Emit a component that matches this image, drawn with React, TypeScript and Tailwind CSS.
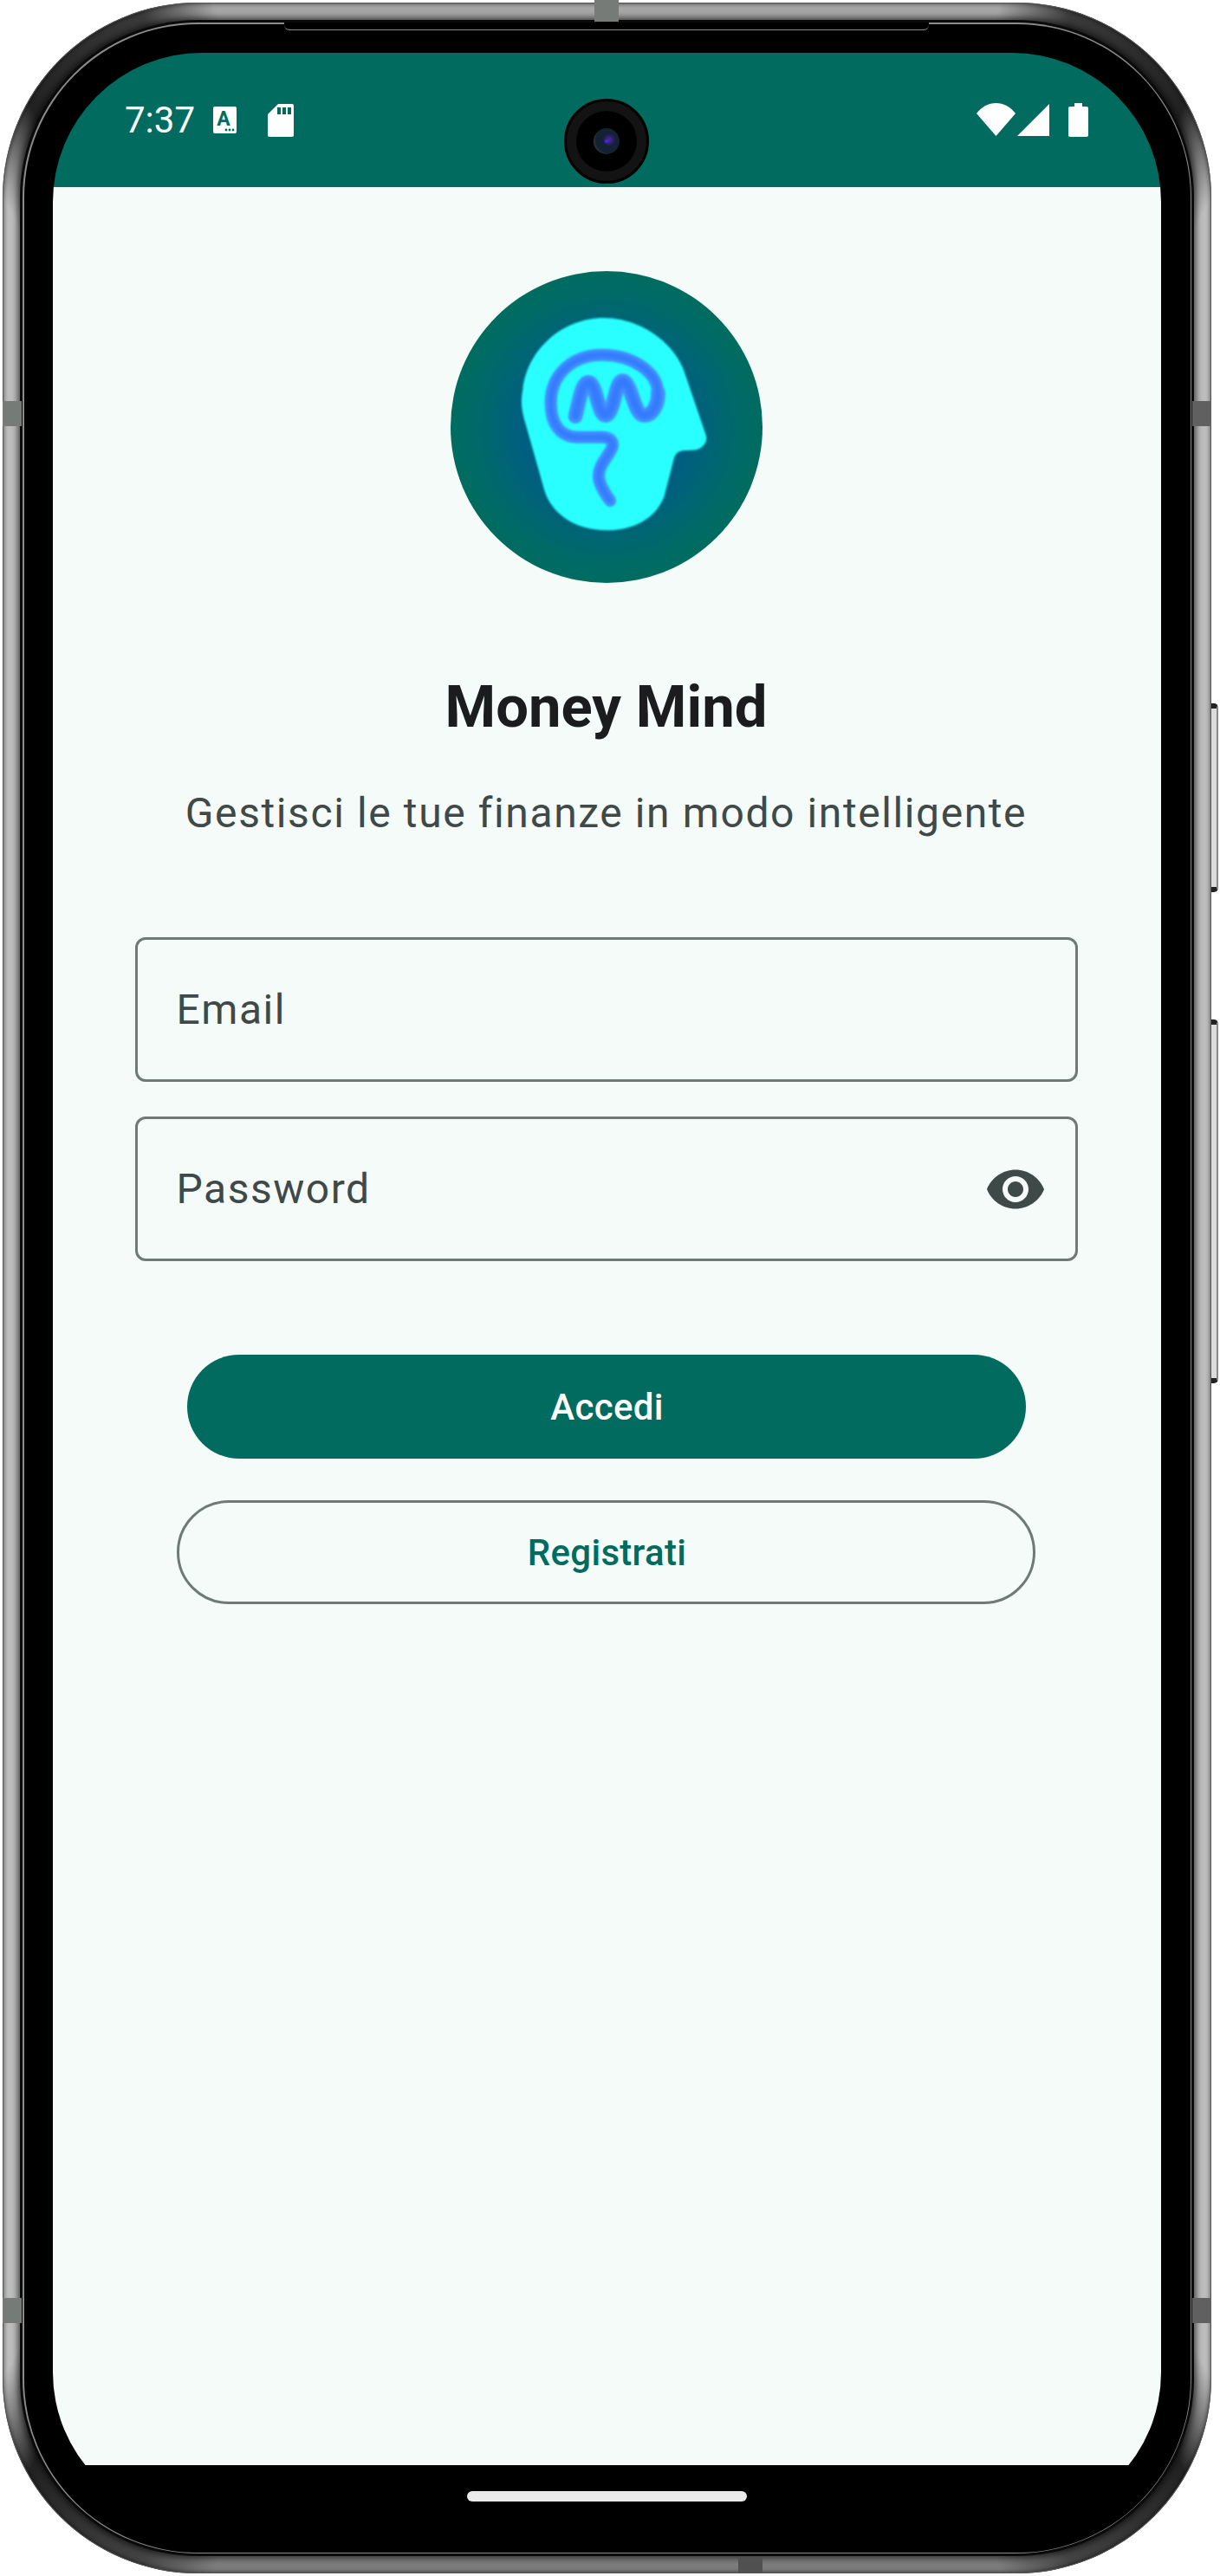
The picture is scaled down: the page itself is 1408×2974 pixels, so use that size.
const Band = ({ className }: { className: string }) => (
  <div className={`absolute ${className}`} />
);

const SideKey = ({ className }: { className: string }) => (
  <div
    className={`absolute left-[1395px] w-[8px] rounded-r-[5px] border-y-[6px] border-r-2 border-y-[#222] border-r-[#8a8a8a] bg-[#dcdcdc] ${className}`}
  />
);

const StatusBar = () => (
  <div className="relative flex h-[155px] shrink-0 items-start justify-between bg-[#006b5e] pr-[84px] pl-[83px] text-white">
    <div className="flex items-start">
      <span className="mt-[53px] text-[42px] leading-[50px]">7:37</span>
      <svg viewBox="0 0 27 31" className="mt-[62px] ml-[21px] h-[31px] w-[27px]">
        <rect width="27" height="31" rx="2" fill="#fff" />
        <text
          x="12"
          y="22"
          textAnchor="middle"
          fontFamily="Roboto"
          fontWeight="700"
          fontSize="23"
          fill="#006b5e"
        >
          A
        </text>
        <circle cx="15" cy="27" r="1.4" fill="#006b5e" />
        <circle cx="19" cy="27" r="1.4" fill="#006b5e" />
        <circle cx="23" cy="27" r="1.4" fill="#006b5e" />
      </svg>
      <svg viewBox="0 0 30 38" className="mt-[59px] ml-[36px] h-[38px] w-[30px]">
        <path
          d="M12 0H28a2 2 0 0 1 2 2V36a2 2 0 0 1-2 2H2a2 2 0 0 1-2-2V12z"
          fill="#fff"
        />
        <rect x="11" y="4" width="4" height="8" fill="#006b5e" />
        <rect x="17" y="4" width="4" height="8" fill="#006b5e" />
        <rect x="23" y="4" width="4" height="8" fill="#006b5e" />
      </svg>
    </div>

    {/* camera */}
    <div className="absolute top-[53px] left-[590px] flex h-[98px] w-[98px] items-center justify-center rounded-full border-[3px] border-black bg-[#131313]">
      <div className="flex h-[70px] w-[70px] items-center justify-center rounded-full bg-black">
        <div className="flex h-[30px] w-[30px] items-center justify-center rounded-full bg-[radial-gradient(circle_at_60%_45%,#4a2aa8_0,#161f3a_30%,#10242f_62%,#3a3d3f_78%,#77797c_92%)]">
          <div className="h-[4px] w-[4px] rounded-full bg-[#3d2be0]" />
        </div>
      </div>
    </div>

    <div className="flex items-start">
      <svg viewBox="0 0 45 38" className="mt-[58px] h-[38px] w-[45px]">
        <path d="M0 12C6 4 14 0 22.5 0S39 4 45 12L22.5 38z" fill="#fff" />
      </svg>
      <svg viewBox="0 0 37 37" className="mt-[59px] ml-[2px] h-[37px] w-[37px]">
        <path d="M37 0V37H0z" fill="#fff" />
      </svg>
      <svg viewBox="0 0 23 39" className="mt-[58px] ml-[22px] h-[39px] w-[23px]">
        <path
          d="M7 0H16V4H21a2 2 0 0 1 2 2V37a2 2 0 0 1-2 2H2a2 2 0 0 1-2-2V6a2 2 0 0 1 2-2H7z"
          fill="#fff"
        />
      </svg>
    </div>
  </div>
);

const brainPath =
  "M778 490C775 420 690 360 585 360C480 360 405 430 407 530C408 600 440 645 500 645H585C615 645 630 665 615 690C595 725 570 750 573 785C577 820 600 845 612 865";
const brainM =
  "M492 573C505 520 515 455 537 455C565 455 570 570 597 570C625 570 630 450 655 450C685 450 695 570 730 570C760 570 780 530 778 490";

const Logo = () => (
  <div className="h-[360px] w-[360px] shrink-0 rounded-full bg-[radial-gradient(circle_closest-side,#005a8c_0%,#005f80_55%,#006a68_85%,#006c5f_100%)]">
    <svg viewBox="60 70 1080 1080" className="h-full w-full">
      <defs>
        <filter id="soft" x="-10%" y="-10%" width="120%" height="120%">
          <feGaussianBlur stdDeviation="3" />
        </filter>
        <filter id="glow" x="-20%" y="-20%" width="140%" height="140%">
          <feGaussianBlur stdDeviation="6" />
        </filter>
      </defs>
      <path
        d="M590 232C720 232 835 320 870 420L945 640C952 668 925 690 900 690L865 692C845 695 838 705 833 722L800 850C770 930 690 968 600 968C490 968 410 910 385 830L320 600C305 550 302 520 310 480C325 340 450 232 590 232Z"
        fill="#2bffff"
        filter="url(#soft)"
      />
      <g fill="none" stroke="#4597ff" strokeLinecap="round" strokeLinejoin="round" filter="url(#soft)">
        <path d={brainPath} strokeWidth="42" />
        <path d={brainM} strokeWidth="50" />
      </g>
      <g fill="none" stroke="#3579ff" strokeLinecap="round" strokeLinejoin="round" filter="url(#glow)">
        <path d={brainPath} strokeWidth="24" />
        <path d={brainM} strokeWidth="30" />
      </g>
    </svg>
  </div>
);

const Field = ({ label, eye }: { label: string; eye?: boolean }) => (
  <div className="flex h-[167px] w-[1088px] items-center justify-between rounded-[12px] border-[3px] border-[#6f7976] pr-[33px] pl-[45px]">
    <span className="text-[48px] leading-[60px] tracking-[1.5px] text-[#3f4948]">{label}</span>
    {eye && (
      <svg viewBox="0 0 24 24" className="h-[72px] w-[72px] fill-[#3f4948]">
        <path d="M12 4.5C7 4.5 2.73 7.61 1 12c1.73 4.39 6 7.5 11 7.5s9.27-3.11 11-7.5c-1.73-4.39-6-7.5-11-7.5zM12 17c-2.76 0-5-2.24-5-5s2.24-5 5-5 5 2.24 5 5-2.24 5-5 5zm0-8c-1.66 0-3 1.34-3 3s1.34 3 3 3 3-1.34 3-3-1.34-3-3-3z" />
      </svg>
    )}
  </div>
);

export default function App() {
  return (
    <div className="h-[2974px] w-[1408px] bg-white pt-[3px] pl-[3px] font-['Roboto',sans-serif]">
      {/* phone body */}
      <div className="relative flex h-[2968px] w-[1395px] rounded-[225px] bg-[conic-gradient(#a6a6a6_0deg,#a6a6a6_17deg,#3a3a3a_20deg,#222_26deg,#bdbdbd_29deg,#bdbdbd_151deg,#222_154deg,#444_160deg,#7c7c7c_163deg,#7c7c7c_197deg,#444_200deg,#222_206deg,#bdbdbd_209deg,#bdbdbd_331deg,#222_334deg,#3a3a3a_340deg,#a6a6a6_343deg,#a6a6a6_360deg)] p-[20px] shadow-[inset_0_0_0_1px_#555,inset_0_0_4px_2px_rgba(0,0,0,0.45)]">
        <div className="flex flex-1 rounded-[205px] bg-[#0a0a0a] p-[3px] shadow-[0_0_6px_3px_rgba(0,0,0,0.55)]">
          <div className="flex flex-1 rounded-[202px] bg-[#8c8c8c] p-[1.5px]">
            <div className="flex flex-1 rounded-[200px] bg-black pt-[33.5px] pr-[33.5px] pb-[36px] pl-[33.5px]">
              {/* screen */}
              <div className="flex flex-1 flex-col overflow-hidden rounded-[172px]">
                <StatusBar />

                <div className="flex flex-1 flex-col items-center bg-[#f4fbf8] pt-[97px] pr-[2px]">
                  <Logo />
                  <h1 className="mt-[104px] text-[67px] leading-[78px] font-bold text-[#1a1c1e]">
                    Money Mind
                  </h1>
                  <p className="mt-[54px] text-[48px] leading-[60px] tracking-[1.6px] text-[#3f4948]">
                    Gestisci le tue finanze in modo intelligente
                  </p>

                  <div className="mt-[113px] flex flex-col gap-[40px]">
                    <Field label="Email" />
                    <Field label="Password" eye />
                  </div>

                  <button className="mt-[108px] h-[120px] w-[968px] rounded-full bg-[#006b5e] pl-[2px] text-[42px] font-medium tracking-[0.3px] text-white">
                    Accedi
                  </button>
                  <button className="mt-[48px] h-[120px] w-[991px] rounded-full border-[3px] border-[#6f7976] pl-[2px] text-[42px] font-medium tracking-[0.3px] text-[#006b5e]">
                    Registrati
                  </button>
                </div>

                <div className="flex h-[65px] shrink-0 justify-center bg-black pt-[30px]">
                  <div className="h-[12px] w-[323px] rounded-full bg-[#ebebeb]" />
                </div>
              </div>
            </div>
          </div>
        </div>

        {/* top notch seam */}
        <div className="absolute top-[23px] left-[325px] h-[8.5px] w-[744px] rounded-b-[6px] border-b-[1.5px] border-[#8c8c8c] bg-black" />

        {/* antenna bands */}
        <Band className="top-[-3px] left-[683px] h-[25px] w-[28px] bg-[#777b78]" />
        <Band className="top-[2950px] left-[849px] h-[18px] w-[28px] bg-[#505050]" />
        <Band className="top-[460px] left-0 h-[29px] w-[22px] bg-[#777b78]" />
        <Band className="top-[2650px] left-0 h-[29px] w-[22px] bg-[#777b78]" />
        <Band className="top-[460px] left-[1373px] h-[29px] w-[22px] bg-[#606060]" />
        <Band className="top-[2650px] left-[1373px] h-[29px] w-[22px] bg-[#606060]" />

        <SideKey className="top-[809px] h-[218px]" />
        <SideKey className="top-[1174px] h-[420px]" />
      </div>
    </div>
  );
}
